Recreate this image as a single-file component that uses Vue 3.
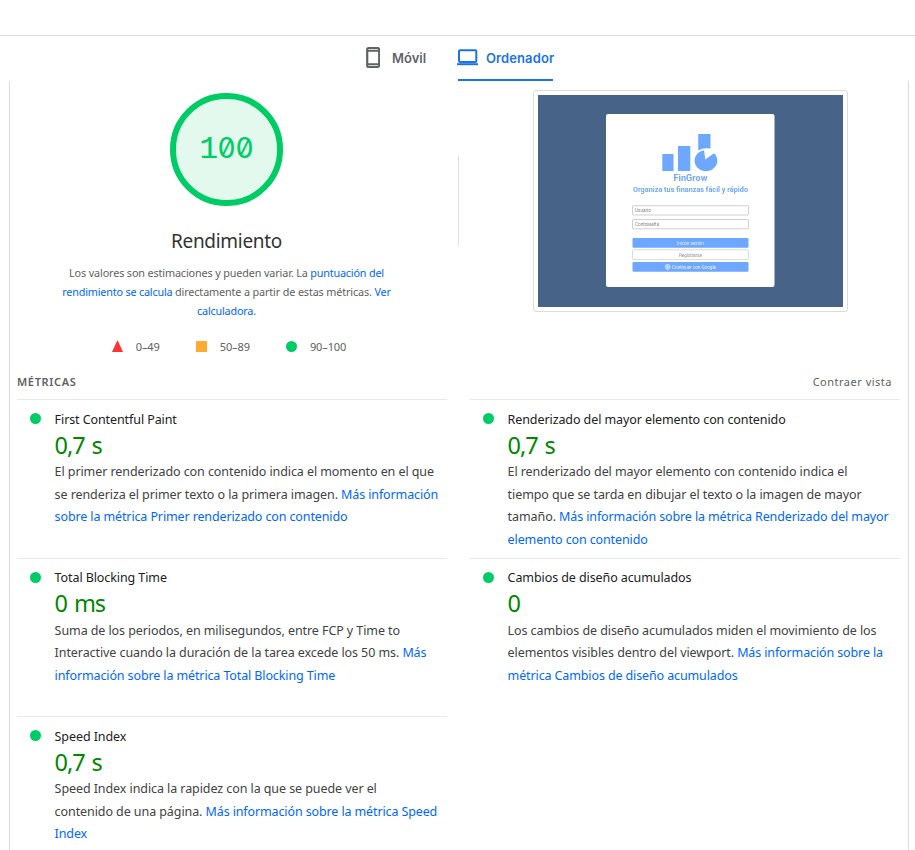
<script setup>
const metrics = [
  {
    title: 'First Contentful Paint',
    value: '0,7 s',
    lines: [
      ['El primer renderizado con contenido indica el momento en el que', ''],
      ['se renderiza el primer texto o la primera imagen. ', 'Más información'],
      ['', 'sobre la métrica Primer renderizado con contenido'],
    ],
  },
  {
    title: 'Renderizado del mayor elemento con contenido',
    value: '0,7 s',
    lines: [
      ['El renderizado del mayor elemento con contenido indica el', ''],
      ['tiempo que se tarda en dibujar el texto o la imagen de mayor', ''],
      ['tamaño. ', 'Más información sobre la métrica Renderizado del mayor'],
      ['', 'elemento con contenido'],
    ],
  },
  {
    title: 'Total Blocking Time',
    value: '0 ms',
    lines: [
      ['Suma de los periodos, en milisegundos, entre FCP y Time to', ''],
      ['Interactive cuando la duración de la tarea excede los 50 ms. ', 'Más'],
      ['', 'información sobre la métrica Total Blocking Time'],
    ],
  },
  {
    title: 'Cambios de diseño acumulados',
    value: '0',
    lines: [
      ['Los cambios de diseño acumulados miden el movimiento de los', ''],
      ['elementos visibles dentro del viewport. ', 'Más información sobre la'],
      ['', 'métrica Cambios de diseño acumulados'],
    ],
  },
  {
    title: 'Speed Index',
    value: '0,7 s',
    lines: [
      ['Speed Index indica la rapidez con la que se puede ver el', ''],
      ['contenido de una página. ', 'Más información sobre la métrica Speed'],
      ['', 'Index'],
    ],
  },
]
</script>

<template>
  <div class="page">
    <nav class="tabs">
      <div class="tab">
        <svg class="phone" width="14" height="21" viewBox="0 0 14 21">
          <rect x="1.200" y="1.100" width="12" height="18.800" rx="1.500" fill="none" stroke="#5f6368" stroke-width="2.200" />
          <path d="M1 3.800h12M1 17.200h12" stroke="#5f6368" stroke-width="1.800" />
        </svg>
        <span class="label movil">Móvil</span>
      </div>
      <div class="tab active">
        <svg class="laptop" width="21" height="17" viewBox="0 0 21 17">
          <rect x="2" y="1.300" width="17.300" height="11.700" rx="1" fill="none" stroke="#1a73e8" stroke-width="2" />
          <path d="M0 15.200h21" stroke="#1a73e8" stroke-width="2" />
        </svg>
        <span class="label">Ordenador</span>
      </div>
    </nav>

    <main class="report">
      <section class="top">
        <div class="score">
          <div class="gauge"><span class="one">1</span><span class="zero">0</span><span class="zero">0</span></div>
          <h1>Rendimiento</h1>
          <p class="note">
            <span>Los valores son estimaciones y pueden variar. La <a>puntuación del</a></span>
            <span><a>rendimiento se calcula</a> directamente a partir de estas métricas. <a>Ver</a></span>
            <span><a>calculadora.</a></span>
          </p>
          <div class="legend">
            <svg width="11" height="12" viewBox="0 0 11 12"><path d="M5.5 0L11 12H0z" fill="#f33" /></svg>
            <span class="range">0–49</span>
            <i class="square"></i>
            <span class="range">50–89</span>
            <i class="dot"></i>
            <span class="range">90–100</span>
          </div>
        </div>
        <div class="divider"></div>
        <div class="shot">
          <svg class="thumb" width="305" height="212" viewBox="0 0 305 212" font-family="Roboto, sans-serif">
            <rect width="305" height="212" fill="#476388" />
            <rect x="68" y="19" width="168.500" height="173" rx="2" fill="#fff" />
            <g fill="#6ea8fe">
              <rect x="124.300" y="59" width="11.200" height="17" />
              <rect x="140" y="51" width="12.300" height="25" />
              <path d="M160.200 39h12.300v14.600q-6.500-1-12.300 1.600z" />
              <path d="M167.300 64.500L166 55.300A11.400 10.500 0 1 0 176 58.200z" />
            </g>
            <g fill="#6ea8fe" font-weight="700">
              <text x="135.500" y="86.300" font-size="8.800" textLength="34" lengthAdjust="spacingAndGlyphs">FinGrow</text>
              <text x="95" y="96.800" font-size="7" textLength="115" lengthAdjust="spacingAndGlyphs">Organiza tus finanzas fácil y rápido</text>
            </g>
            <g fill="#fff" stroke="#bbb" stroke-width=".7">
              <rect x="94.500" y="110.700" width="116" height="9.300" rx=".6" />
              <rect x="94.500" y="124.500" width="116" height="9.300" rx=".6" />
              <rect x="94.500" y="154.800" width="116" height="9.800" rx="1" stroke="#ccc" />
            </g>
            <g fill="#6ea8fe">
              <rect x="94.500" y="143" width="116" height="9.700" rx="1" />
              <rect x="94.500" y="167" width="116" height="9.800" rx="1" />
            </g>
            <g font-size="4.800">
              <text x="97" y="117" fill="#888" textLength="16">Usuario</text>
              <text x="97" y="130.800" fill="#888" textLength="24">Contraseña</text>
              <text x="139" y="149.500" fill="#dbe9ff" textLength="27">Iniciar sesión</text>
              <text x="141" y="161.500" fill="#999" textLength="23">Registrarse</text>
              <text x="134" y="173.600" fill="#e8f1ff" textLength="44">Continuar con Google</text>
            </g>
            <g fill="none" stroke="#e8f1ff" stroke-width=".8">
              <circle cx="129.700" cy="171.900" r="2.400" />
              <path d="M127.300 171.900h4.800M129.700 169.500v4.800" />
            </g>
          </svg>
        </div>
      </section>

      <header class="metrics-head">
        <span class="caps">MÉTRICAS</span>
        <span class="toggle">Contraer vista</span>
      </header>

      <section class="grid">
        <article v-for="m in metrics" :key="m.title" class="metric">
          <i class="dot"></i>
          <div class="body">
            <div class="title">{{ m.title }}</div>
            <div class="value">{{ m.value }}</div>
            <div class="desc">
              <div v-for="(l, i) in m.lines" :key="i" class="line">{{ l[0] }}<a v-if="l[1]">{{ l[1] }}</a></div>
            </div>
          </div>
        </article>
      </section>
    </main>
  </div>
</template>

<style>
body { background: #fff; overflow: hidden; }
</style>

<style scoped>
.page {
  box-sizing: border-box;
  width: 915px;
  height: 850px;
  overflow: hidden;
  padding-top: 35px;
  font-family: "Noto Sans", "Open Sans", sans-serif;
  color: #212121;
}
.tabs {
  box-sizing: border-box;
  height: 46px;
  border-top: 1px solid #dadce0;
  display: flex;
  padding-left: 366px;
  gap: 32px;
}
.tab {
  box-sizing: border-box;
  height: 45px;
  display: flex;
  align-items: center;
  border-bottom: 2px solid transparent;
  color: #5f6368;
}
.tab.active { color: #1a73e8; border-color: #1a73e8; width: 95px; }
.phone { margin-right: 12px; }
.laptop { flex: none; margin-left: -1px; margin-right: 8px; }
.label { font: 600 13px/20px Inter, Roboto, sans-serif; letter-spacing: .1px; white-space: nowrap; padding-top: 1px; }
.movil { width: 34px; letter-spacing: 0; }
.report {
  box-sizing: border-box;
  width: 900px;
  height: 769px;
  margin-left: 9px;
  border-left: 1px solid #dadce0;
  border-right: 1px solid #dadce0;
  padding: 0 8px 0 7px;
}
.top { display: flex; height: 285px; }
.score {
  width: 419px;
  display: flex;
  flex-direction: column;
  align-items: center;
  padding-top: 12px;
  box-sizing: border-box;
}
.gauge {
  box-sizing: border-box;
  width: 112.4px;
  height: 112.4px;
  margin-top: .3px;
  border: 6.5px solid #0c6;
  border-radius: 50%;
  background: #e3f9ed;
  color: #0c6;
  display: flex;
  justify-content: center;
  align-items: baseline;
  line-height: 99px;
}
.gauge span { width: 18px; text-align: center; -webkit-text-stroke: .2px #0c6; }
.one { font-family: "Liberation Mono", monospace; font-size: 31px; }
.zero { font-family: Inter, sans-serif; font-size: 28px; font-feature-settings: "zero"; }
h1 { margin: 21px 0 0; font-size: 19px; line-height: 28px; font-weight: 400; letter-spacing: -.3px; color: #333; }
.note { margin: 8px 0 0; font-size: 10.8px; line-height: 19px; letter-spacing: -.13px; color: #616161; text-align: center; }
.note span { display: block; white-space: nowrap; }
.note a { letter-spacing: -.18px; }
a { color: #06f; }
.legend { display: flex; align-items: center; margin: 16.5px 0 0 5px; height: 20px; font-size: 11px; letter-spacing: -.1px; color: #616161; }
.range { margin-left: 13px; margin-right: 36px; }
.legend .range:last-child { margin-right: 0; }
.square { width: 11px; height: 11px; background: #fa3; }
.dot { width: 11px; height: 11px; border-radius: 50%; background: #0c6; flex: none; }
.divider { width: 1px; height: 90px; margin-top: 75px; margin-left: 22px; background: #e0e0e0; }
.shot {
  box-sizing: border-box;
  width: 315px;
  height: 222px;
  margin: 9px 0 0 74px;
  padding: 4px;
  border: 1px solid #dadce0;
  border-radius: 3px;
}
.thumb { display: block; filter: blur(.3px); }
.metrics-head {
  height: 33px;
  display: flex;
  justify-content: space-between;
  padding-right: 8px;
  font-size: 11px;
  line-height: 32px;
  color: #616161;
}
.caps { font-weight: 600; letter-spacing: .65px; }
.toggle { letter-spacing: .5px; }
.grid {
  display: grid;
  grid-template-columns: 430px 430px;
  column-gap: 23px;
  grid-auto-rows: 158.5px;
}
.metric {
  box-sizing: border-box;
  border-top: 1px solid #e8e8e8;
  display: flex;
  padding: 7.9px 0 0 13px;
}
.metric .dot { margin: 5.2px 13.6px 0 0; }
.title { font-size: 12.5px; line-height: 23px; letter-spacing: -.09px; }
.value { font-size: 23.5px; line-height: 29px; letter-spacing: -1.1px; word-spacing: 2px; color: #080; margin-bottom: 1.3px; }
.desc { font-size: 12.5px; line-height: 22.6px; letter-spacing: -.08px; color: #424242; }
.desc a { letter-spacing: -.12px; }
.line { white-space: pre; }
</style>
